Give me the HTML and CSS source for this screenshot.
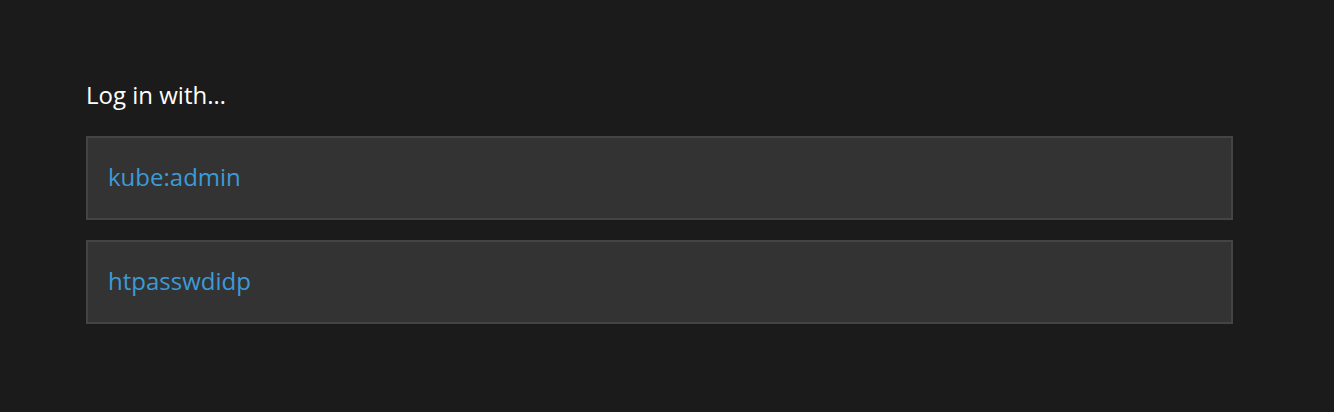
FILE: index.html
```html
<!DOCTYPE html>
<html>
<head>
<meta charset="utf-8">
<link rel="stylesheet" href="styles.css">
</head>
<body>
<main class="login">
  <h1 class="title">Log in with…</h1>
  <ul class="providers">
    <li class="provider"><a href="#" class="provider-link">kube:admin</a></li>
    <li class="provider"><a href="#" class="provider-link">htpasswdidp</a></li>
  </ul>
</main>
</body>
</html>
```
FILE: styles.css
```css
html, body {
  margin: 0;
  padding: 0;
  background: #1b1b1b;
  height: 100%;
}
body {
  font-family: "Open Sans", "Liberation Sans", sans-serif;
}
.login {
  padding: 79px 101px 0 86px;
}
.title {
  margin: 0 0 25px 0;
  font-size: 24px;
  font-weight: 400;
  color: #ffffff;
  line-height: 32px;
}
.providers {
  list-style: none;
  margin: 0;
  padding: 0;
  display: flex;
  flex-direction: column;
  gap: 20px;
}
.provider {
  background: #333333;
  border: 2px solid #444444;
  height: 76px;
  display: flex;
  align-items: center;
  padding: 0 20px 4px;
}
.provider-link {
  color: #3d9ad8;
  text-decoration: none;
  font-size: 24px;
}
```
